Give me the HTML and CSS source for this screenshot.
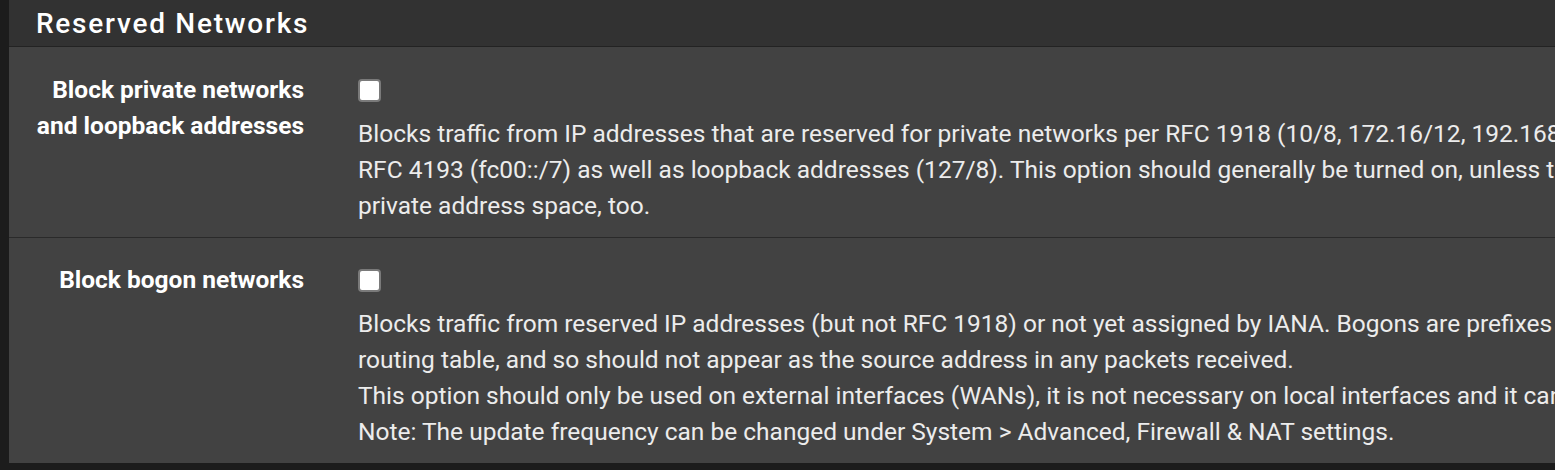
FILE: index.html
```html
<!DOCTYPE html>
<html>
<head>
<meta charset="utf-8">
<link rel="stylesheet" href="styles.css">
</head>
<body>
<div class="panel">
  <div class="panel-heading"><h2 class="panel-title">Reserved Networks</h2></div>
  <div class="panel-body">
    <div class="form-row">
      <div class="label-col">Block private networks<br>and loopback addresses</div>
      <div class="input-col">
        <div class="check-line"><span class="checkbox"></span></div>
        <p class="help">Blocks traffic from IP addresses that are reserved for private networks per RFC 1918 (10/8, 172.16/12, 192.168/16) and unique local addresses per<br>RFC 4193 (fc00::/7) as well as loopback addresses (127/8). This option should generally be turned on, unless this network interface resides in such a<br>private address space, too.</p>
      </div>
    </div>
    <div class="form-row">
      <div class="label-col">Block bogon networks</div>
      <div class="input-col">
        <div class="check-line"><span class="checkbox"></span></div>
        <p class="help">Blocks traffic from reserved IP addresses (but not RFC 1918) or not yet assigned by IANA. Bogons are prefixes that should never appear in the Internet<br>routing table, and so should not appear as the source address in any packets received.<br>This option should only be used on external interfaces (WANs), it is not necessary on local interfaces and it can potentially block required local traffic.<br>Note: The update frequency can be changed under System &gt; Advanced, Firewall &amp; NAT settings.</p>
      </div>
    </div>
  </div>
</div>
</body>
</html>
```
FILE: styles.css
```css
html, body {
  margin: 0;
  padding: 0;
  background: #1c1c1c;
  overflow: hidden;
  width: 1555px;
  height: 470px;
}
body {
  padding-left: 9px;
  font-family: Roboto, "Liberation Sans", sans-serif;
}
.panel {
  width: 2400px;
  background: #424242;
}
.panel-heading {
  height: 46px;
  background: #323232;
  border-bottom: 1px solid #232323;
  display: flex;
  align-items: center;
  padding-left: 27px;
}
.panel-title {
  margin: 0;
  font-size: 28px;
  font-weight: 500;
  letter-spacing: 1.75px;
  color: #ffffff;
}
.form-row {
  display: flex;
  padding: 25px 0 13px;
}
.form-row + .form-row {
  border-top: 1px solid #2a2a2a;
  padding-top: 24px;
}
.label-col {
  width: 295px;
  flex: none;
  text-align: right;
  font-size: 24.5px;
  font-weight: 700;
  line-height: 36px;
  color: #ffffff;
}
.input-col {
  margin-left: 54px;
  flex: 1;
}
.check-line {
  height: 36px;
  display: flex;
  align-items: center;
}
.checkbox {
  display: block;
  width: 19px;
  height: 19px;
  background: #ffffff;
  border: 2px solid #7a7a7a;
  border-radius: 4px;
}
.help {
  margin: 8px 0 0;
  font-size: 24.5px;
  line-height: 36px;
  color: #ececec;
  white-space: nowrap;
}
```
